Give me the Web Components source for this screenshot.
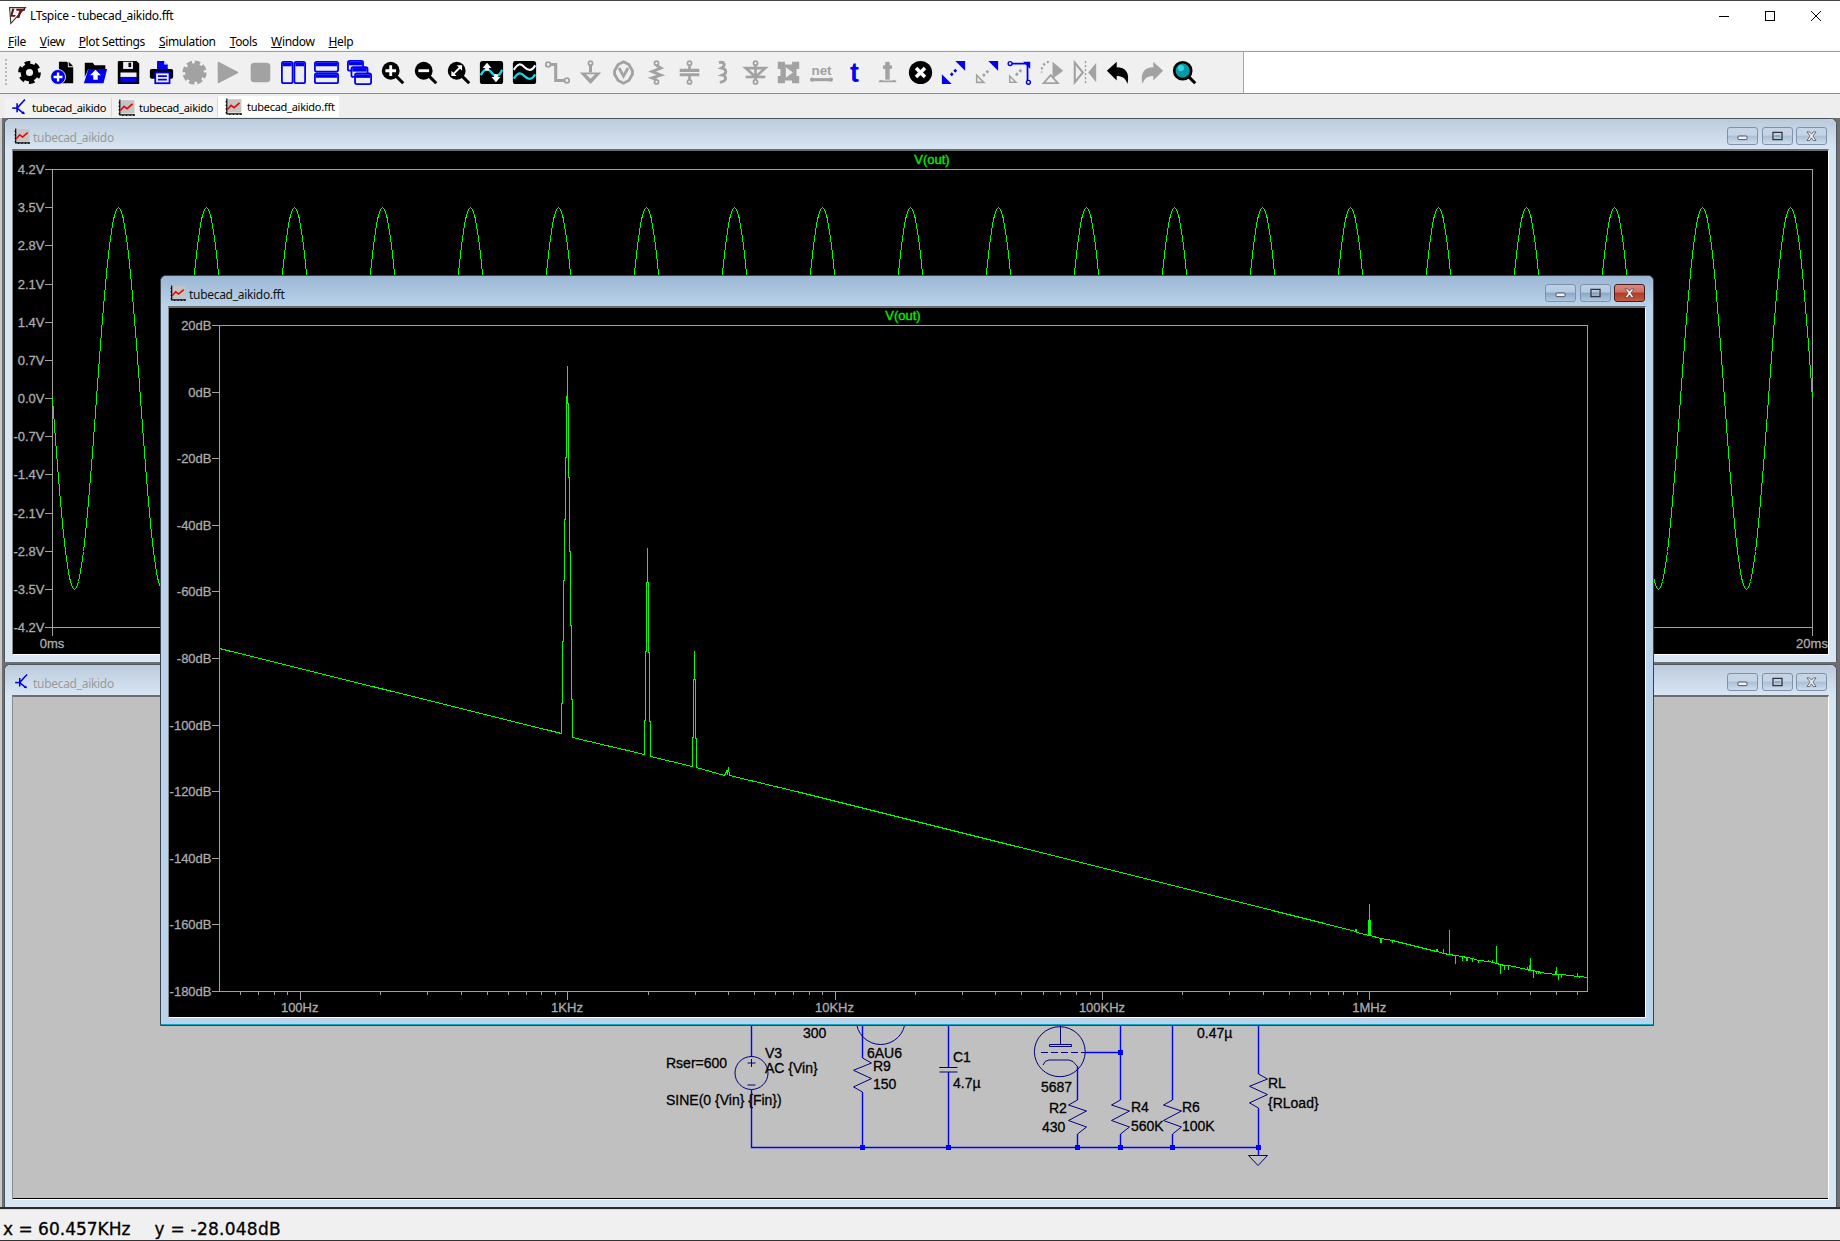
<!doctype html>
<html>
<head>
<meta charset="utf-8">
<title>LTspice</title>
<style>
  html, body { margin: 0; padding: 0; background: #f0f0f0; overflow: hidden; }
</style>
</head>
<body>
<lt-app>
  <lt-titlebar slot="title">LTspice - tubecad_aikido.fft</lt-titlebar>
  <lt-menubar slot="menu">
    <lt-menu><u>F</u>ile</lt-menu>
    <lt-menu><u>V</u>iew</lt-menu>
    <lt-menu><u>P</u>lot Settings</lt-menu>
    <lt-menu><u>S</u>imulation</lt-menu>
    <lt-menu><u>T</u>ools</lt-menu>
    <lt-menu><u>W</u>indow</lt-menu>
    <lt-menu><u>H</u>elp</lt-menu>
  </lt-menubar>
  <lt-toolbar slot="tools"></lt-toolbar>
  <lt-tabs slot="tabs">
    <lt-tab icon="schem" style="width:107px">tubecad_aikido</lt-tab>
    <lt-tab icon="plot" style="width:106px">tubecad_aikido</lt-tab>
    <lt-tab icon="plot" active style="width:121px">tubecad_aikido.fft</lt-tab>
  </lt-tabs>
  <lt-mdi slot="mdi">
    <lt-window icon="plot" x="4" y="0" w="1833" h="544" label="tubecad_aikido">
      <lt-plot kind="time" vb="13 151 1815 502"></lt-plot>
    </lt-window>
    <lt-window icon="schem" x="4" y="546" w="1833" h="543" label="tubecad_aikido">
      <lt-schematic vb="13 697 1815 501"></lt-schematic>
    </lt-window>
    <lt-window icon="plot" x="160" y="157" w="1494" h="751" label="tubecad_aikido.fft" active>
      <lt-plot kind="fft" vb="169 308 1476 709"></lt-plot>
    </lt-window>
  </lt-mdi>
  <lt-status slot="status"><span>x = 60.457KHz</span><span style="letter-spacing:.25px">y = -28.048dB</span></lt-status>
</lt-app>

<script>
const GREY = '#a2a2a2';
const BLUE = '#0000f0';
const CYAN = '#19d6e6';
const UI_FONT = '"Noto Sans", "Open Sans", sans-serif';
const TRACE_FONT = '"Liberation Sans", Arial, sans-serif';

const zoomGlass = inner => `<circle cx="12" cy="12" r="10" fill="#000"/><path d="M18 18l8 8" stroke="#000" stroke-width="3.4" fill="none"/>${inner}`;
const pinTop = c => `<circle cx="14" cy="3.5" r="2.3" fill="none" stroke="${c}" stroke-width="2"/>`;
const pinBottom = c => `<circle cx="14" cy="24.5" r="2.3" fill="none" stroke="${c}" stroke-width="2"/>`;

// toolbar and window glyphs, all on a 28 box
const ICONS = {
  gear: `<circle cx="14" cy="14" r="7" fill="none" stroke="#000" stroke-width="6"/><circle cx="14" cy="14" r="10.5" fill="none" stroke="#000" stroke-width="4.6" stroke-dasharray="6 5"/>`,
  newdoc: `<path d="M10 2h9l1 1v5h6v18H10z" fill="#000"/><path d="M21 2l5 5h-5z" fill="#000"/><circle cx="9" cy="19" r="8.4" fill="${BLUE}" stroke="#f0f0f0" stroke-width="1"/><path d="M9 14v10M4 19h10" stroke="#fff" stroke-width="2.6"/>`,
  open: `<path d="M2 3h9l2 3h12v4H6l-4 9z" fill="#000"/><path d="M6 10h21l-4 16H1z" fill="${BLUE}"/><path d="M14 11l6 6h-3.500v5h-5v-5H8z" fill="#fff"/>`,
  save: `<path d="M3 1h20l3 3v23H2V2z" fill="#000"/><rect x="8" y="2" width="11" height="8" fill="#f0f0f0"/><rect x="14" y="3" width="3" height="5" fill="#000"/><rect x="5" y="14" width="18" height="5" fill="#f0f0f0"/><rect x="5" y="19" width="18" height="6" fill="${BLUE}"/>`,
  print: `<path d="M9 1h8l4 4v7H9z" fill="${BLUE}"/><path d="M17 1l4 4h-4z" fill="#f0f0f0"/><rect x="1" y="10" width="26" height="11" rx="2" fill="#000"/><rect x="7" y="14" width="16" height="12" fill="#f0f0f0" stroke="${BLUE}" stroke-width="2"/><path d="M10 18h10M10 22h10" stroke="${BLUE}" stroke-width="2"/>`,
  halt: `<circle cx="14" cy="14" r="10.5" fill="${GREY}"/><circle cx="14" cy="14" r="11.5" fill="none" stroke="${GREY}" stroke-width="4" stroke-dasharray="6 3.030"/>`,
  play: `<path d="M4 3l21 11L4 25z" fill="${GREY}" stroke="${GREY}" stroke-linejoin="round" stroke-width="2"/>`,
  stop: `<rect x="3" y="3" width="22" height="22" rx="4" fill="${GREY}"/>`,
  tilev: `<rect x="1" y="2" width="12" height="24" rx="2" fill="#eee" stroke="${BLUE}" stroke-width="2"/><rect x="15" y="2" width="12" height="24" rx="2" fill="#eee" stroke="${BLUE}" stroke-width="2"/><path d="M2 5h10M16 5h10" stroke="${BLUE}" stroke-width="4"/>`,
  tileh: `<rect x="1" y="2" width="26" height="11" rx="2" fill="#eee" stroke="${BLUE}" stroke-width="2"/><rect x="1" y="15" width="26" height="11" rx="2" fill="#eee" stroke="${BLUE}" stroke-width="2"/><path d="M2 5h24M2 18h24" stroke="${BLUE}" stroke-width="4"/>`,
  cascade: `<rect x="1" y="1" width="17" height="11" rx="2" fill="#eee" stroke="${BLUE}" stroke-width="2"/><path d="M2 4h15" stroke="${BLUE}" stroke-width="4"/><rect x="5" y="8" width="18" height="11" rx="2" fill="#eee" stroke="${BLUE}" stroke-width="2"/><path d="M6 11h16" stroke="${BLUE}" stroke-width="4"/><rect x="9" y="15" width="18" height="12" rx="2" fill="#eee" stroke="${BLUE}" stroke-width="2"/><path d="M10 18h16" stroke="${BLUE}" stroke-width="4"/>`,
  zoomin: zoomGlass(`<path d="M12 6v12M6 12h12" stroke="#fff" stroke-width="3.200"/>`),
  zoomout: zoomGlass(`<path d="M6 12h12" stroke="#fff" stroke-width="3.200"/>`),
  zoomfit: zoomGlass(`<path d="M7 17L17 7" stroke="#fff" stroke-width="2"/><path d="M12 6h6v6zM6 12v6h6z" fill="#fff"/>`),
  autoscale: `<rect x="1" y="1" width="26" height="26" rx="3" fill="#000"/><path d="M2 17c5-9 8-8 12-3s8 6 12-3" fill="none" stroke="${CYAN}" stroke-width="2.600"/><path d="M9 3l5 6h-3v3H7V9H4zM19 25l-5-6h3v-3h4v3h3z" fill="#fff"/>`,
  wave: `<rect x="1" y="1" width="26" height="26" rx="3" fill="#000"/><path d="M2 11c5-8 8-7 12-3s8 5 12-2" fill="none" stroke="#fff" stroke-width="2.400"/><path d="M2 21c5-8 8-7 12-3s8 5 12-2" fill="none" stroke="${CYAN}" stroke-width="2.600"/>`,
  wire: `<path d="M3 5h9v18h10" fill="none" stroke="${GREY}" stroke-width="3.400"/><circle cx="3.500" cy="5" r="2.600" fill="#f0f0f0" stroke="${GREY}" stroke-width="2"/><circle cx="24.500" cy="23" r="2.600" fill="#f0f0f0" stroke="${GREY}" stroke-width="2"/>`,
  ground: pinTop(GREY) + `<path d="M14 6v8" stroke="${GREY}" stroke-width="3.400"/><path d="M2 14h24L14 27z" fill="${GREY}"/><path d="M9 16h10l-5 5z" fill="#eee"/>`,
  label: `<path d="M14 2l6 3 4 7v4l-4 7-6 3-6-3-4-7v-4l4-7z" fill="none" stroke="${GREY}" stroke-width="3.200"/><path d="M9 9l5 9 5-9" fill="none" stroke="${GREY}" stroke-width="3.200"/>`,
  resistor: pinTop(GREY) + pinBottom(GREY) + `<path d="M14 6l5 3-10 4 10 4-10 3 5 2" fill="none" stroke="${GREY}" stroke-width="3.200"/>`,
  cap: pinTop(GREY) + pinBottom(GREY) + `<path d="M14 6v5M14 17v5" stroke="${GREY}" stroke-width="3"/><path d="M3 11.500h22M3 16.500h22" stroke="${GREY}" stroke-width="3.600"/>`,
  inductor: `<path d="M10 3c6-2 8 3 3 6c6 1 6 6 1 8c5 1 5 7-3 8" fill="none" stroke="${GREY}" stroke-width="3.200"/>`,
  diode: pinTop(GREY) + pinBottom(GREY) + `<path d="M14 6v16" stroke="${GREY}" stroke-width="3"/><path d="M3 9h22L14 19z" fill="none" stroke="${GREY}" stroke-width="3"/><path d="M3 19h22" stroke="${GREY}" stroke-width="3"/>`,
  component: `<path d="M2 2h8v3h8V2h8v8h-3v8h3v8h-8v-3h-8v3H2v-8h3v-8H2z" fill="${GREY}"/><path d="M11 8l8 6-8 6z" fill="#eee"/>`,
  net: `<text x="14" y="17" text-anchor="middle" font-family="Liberation Sans" font-weight="700" font-size="15" fill="${GREY}">net</text><path d="M3 22h22" stroke="${GREY}" stroke-width="3.400"/><circle cx="3.500" cy="22" r="2.400" fill="${GREY}"/><circle cx="24.500" cy="22" r="2.400" fill="${GREY}"/>`,
  text: `<text x="14" y="25" text-anchor="middle" font-family="Liberation Sans" font-weight="700" font-size="30" fill="${BLUE}">t</text>`,
  spice: `<path d="M14 2v20" stroke="${GREY}" stroke-width="5"/><path d="M9 8h10" stroke="${GREY}" stroke-width="4"/><path d="M4 25c0-3 4-3 5-2h10c1-1 5-1 5 2" fill="${GREY}"/>`,
  cancel: `<circle cx="14" cy="14" r="13" fill="#000"/><path d="M9 9l10 10M19 9L9 19" stroke="#fff" stroke-width="4"/>`,
  move: `<path d="M27 1v11L16 1z" fill="${BLUE}"/><path d="M1 27V16l11 11z" fill="${BLUE}"/><path d="M11 17l6-6" stroke="${BLUE}" stroke-width="3" stroke-dasharray="3 2.500"/>`,
  drag: `<path d="M27 1v11L16 1z" fill="${BLUE}"/><path d="M3 25V17l8 8z" fill="none" stroke="${GREY}" stroke-width="1.800"/><path d="M10 18l8-8" stroke="${GREY}" stroke-width="3" stroke-dasharray="3 2.500"/>`,
  rotate: `<path d="M5 4h18v20" fill="none" stroke="${BLUE}" stroke-width="2"/><path d="M18 2h8v8z" fill="${BLUE}"/><circle cx="3.500" cy="4" r="2.200" fill="#eee" stroke="${BLUE}" stroke-width="1.600"/><circle cx="24" cy="25" r="2.200" fill="#eee" stroke="${BLUE}" stroke-width="1.600"/><path d="M3 25v-7l7 7z" fill="none" stroke="${GREY}" stroke-width="1.600"/><path d="M10 17l6-6" stroke="${GREY}" stroke-width="3" stroke-dasharray="3 2.500"/>`,
  flip: `<path d="M14 2l12 10-12 9z" fill="${GREY}"/><path d="M4 26l8-9 8 9z" fill="none" stroke="${GREY}" stroke-width="2"/><path d="M10 2a10 10 0 0 0-8 12" fill="none" stroke="${GREY}" stroke-width="2.400" stroke-dasharray="2.500 2.500"/>`,
  mirror: `<path d="M2 3l9 11-9 11z" fill="none" stroke="${GREY}" stroke-width="2.400"/><path d="M26 3l-9 11 9 11z" fill="${GREY}"/><path d="M14 1v26" stroke="${GREY}" stroke-width="1.600" stroke-dasharray="2.500 2"/>`,
  undo: `<path d="M1 12L12 2v6c10 0 15 6 12 19c-2-7-6-9-12-9v5z" fill="#000"/>`,
  redo: `<path d="M27 12L16 2v6C6 8 1 14 4 27c2-7 6-9 12-9v5z" fill="${GREY}"/>`,
  find: `<circle cx="12" cy="12" r="9.500" fill="#079aa6" stroke="#000" stroke-width="3"/><circle cx="10" cy="9" r="3.500" fill="#2fd4dc"/><path d="M18 18l8 8" stroke="#000" stroke-width="3.400"/>`,
  plot: `<rect x="4" y="2" width="23" height="22" fill="#c4c4c4"/><path d="M3 1v25h25M1 6h2M1 12h2M1 18h2M1 24h2M8 26v2M14 26v2M20 26v2M26 26v2" fill="none" stroke="#000" stroke-width="2"/><path d="M4 19l6-7 5 4 9-8" fill="none" stroke="#e00" stroke-width="2.600"/>`,
  schem: `<path d="M10 7v15M10 15l10-11M10 15l11 9M20 4l3-3" fill="none" stroke="#0000e0" stroke-width="2.600"/><path d="M23 25l-6-1 4-4z" fill="#0000e0"/><path d="M2 15h8" stroke="#0000e0" stroke-width="2.600"/>`,
  logo: `<path d="M1 1h26L3 27z" fill="#fff" stroke="#333" stroke-width="1.800"/><path d="M5 3h4l-3 10h5l-1 3H2zM12 3h15l-1 3h-5l-4 12h-4l4-12h-5z" fill="#6b1212"/>`
};

class LtIcon extends HTMLElement {
  constructor() {
    super();
    this.attachShadow({ mode: 'open' });
  }

  connectedCallback() {
    const size = this.getAttribute('size') || 16;
    this.shadowRoot.innerHTML = `
      <style>
        :host { display: inline-block; width: ${size}px; height: ${size}px; flex: none; }
        svg { display: block; overflow: visible; }
      </style>
      <svg width="${size}" height="${size}" viewBox="0 0 28 28">${ICONS[this.getAttribute('name')] || ''}</svg>`;
  }
}

class LtApp extends HTMLElement {
  constructor() {
    super();
    this.attachShadow({ mode: 'open' });
    this.shadowRoot.innerHTML = `
      <style>
        :host { display: flex; flex-direction: column; width: 1840px; height: 1241px; font-family: ${UI_FONT}; color: #000; }
      </style>
      <slot name="title"></slot>
      <slot name="menu"></slot>
      <slot name="tools"></slot>
      <slot name="tabs"></slot>
      <slot name="mdi"></slot>
      <slot name="status"></slot>`;
  }
}

class LtTitlebar extends HTMLElement {
  constructor() {
    super();
    this.attachShadow({ mode: 'open' });
    this.shadowRoot.innerHTML = `
      <style>
        :host { display: flex; align-items: center; height: 32px; background: #fff; border-top: 1px solid #444; padding-left: 9px; font-size: 12px; letter-spacing: -.3px; }
        .text { margin-left: 4px; margin-top: -3px; flex: 1; }
        .btn { width: 46px; height: 30px; display: flex; align-items: center; justify-content: center; margin-top: -3px; }
        .caption { display: flex; margin-right: 1px; }
      </style>
      <lt-icon name="logo" size="17" style="margin-top:-3px"></lt-icon>
      <span class="text"><slot></slot></span>
      <span class="caption">
        <span class="btn"><svg width="12" height="12" shape-rendering="crispEdges"><path d="M1 6.500h10" stroke="#000"/></svg></span>
        <span class="btn"><svg width="12" height="12" shape-rendering="crispEdges"><rect x="1.500" y="1.500" width="9" height="9" fill="none" stroke="#000"/></svg></span>
        <span class="btn"><svg width="12" height="12"><path d="M1 1l10 10M11 1L1 11" stroke="#000"/></svg></span>
      </span>`;
  }
}

class LtMenubar extends HTMLElement {
  constructor() {
    super();
    this.attachShadow({ mode: 'open' });
    this.shadowRoot.innerHTML = `
      <style>
        :host { display: flex; height: 18px; align-items: center; background: #fff; padding-left: 1px; font-size: 12px; letter-spacing: -.35px; box-shadow: inset 0 -1px 0 #f4f4f4; }
      </style>
      <slot></slot>`;
  }
}

class LtMenu extends HTMLElement {
  constructor() {
    super();
    this.attachShadow({ mode: 'open' });
    this.shadowRoot.innerHTML = `
      <style>
        :host { display: block; padding: 0 7px; margin-top: -2px; white-space: nowrap; }
      </style>
      <slot></slot>`;
  }
}

const TOOLS = ['gear', 'newdoc', 'open', 'save', 'print', 'halt', 'play', 'stop', 'tilev', 'tileh', 'cascade',
  'zoomin', 'zoomout', 'zoomfit', 'autoscale', 'wave', 'wire', 'ground', 'label', 'resistor', 'cap', 'inductor',
  'diode', 'component', 'net', 'text', 'spice', 'cancel', 'move', 'drag', 'rotate', 'flip', 'mirror', 'undo', 'redo', 'find'];

class LtToolbar extends HTMLElement {
  constructor() {
    super();
    this.attachShadow({ mode: 'open' });
    const items = TOOLS.map(n => `<span class="cell"><lt-icon name="${n}" size="25"></lt-icon></span>`).join('');
    this.shadowRoot.innerHTML = `
      <style>
        :host { display: block; height: 41px; background: #fff; border-top: 1px solid #a0a0a0; border-bottom: 1px solid #8c8c8c; }
        .band { width: 1244px; height: 41px; box-sizing: border-box; background: #f0f0f0; border-right: 1px solid #a8a8a8; display: flex; align-items: center; padding-left: 5px; }
        .grip { width: 2px; height: 28px; margin-right: 6px; background: repeating-linear-gradient(#b8b8b8 0 2px, transparent 2px 4px); }
        .cell { width: 33px; display: flex; justify-content: center; flex: none; }
      </style>
      <div class="band"><span class="grip"></span>${items}</div>`;
  }
}

class LtTabs extends HTMLElement {
  constructor() {
    super();
    this.attachShadow({ mode: 'open' });
    this.shadowRoot.innerHTML = `
      <style>
        :host { display: flex; align-items: flex-start; height: 24px; background: #eee; padding-left: 5px; font-size: 11px; letter-spacing: -.27px; }
      </style>
      <slot></slot>`;
  }
}

class LtTab extends HTMLElement {
  constructor() {
    super();
    this.attachShadow({ mode: 'open' });
  }

  connectedCallback() {
    this.shadowRoot.innerHTML = `
      <style>
        :host { display: flex; align-items: center; box-sizing: border-box; height: 19px; margin-top: 4px; padding-left: 6px; gap: 4px; background: #f2f2f2; border-right: 1px solid #d8d8d8; white-space: nowrap; }
        :host([active]) { height: 21px; margin-top: 2px; background: #fff; padding-left: 7px; gap: 5px; border-right: none; }
      </style>
      <lt-icon name="${this.getAttribute('icon')}" size="17"></lt-icon>
      <span><slot></slot></span>`;
  }
}

class LtMdi extends HTMLElement {
  constructor() {
    super();
    this.attachShadow({ mode: 'open' });
    this.shadowRoot.innerHTML = `
      <style>
        :host { display: block; position: relative; height: 1091px; background: #6e6e6e; }
        .edge { position: absolute; left: 0; top: 0; width: 2px; height: 100%; background: #c8c8c8; }
        .foot { position: absolute; left: 0; right: 0; bottom: 0; height: 2px; background: #2c2c2c; }
      </style>
      <div class="edge"></div><div class="foot"></div>
      <slot></slot>`;
  }
}

class LtCaptionButton extends HTMLElement {
  constructor() {
    super();
    this.attachShadow({ mode: 'open' });
  }

  connectedCallback() {
    const kind = this.getAttribute('kind');
    const glyph = {
      min: '<rect x="11" y="8" width="10" height="4" rx="1" fill="#eef2f6" stroke="#445"/>',
      max: '<rect x="11" y="4" width="10" height="8" fill="none" stroke="#334" stroke-width="1.400"/><rect x="13" y="7" width="6" height="2" fill="#8aa"/>',
      close: '<path d="M11 3.500l3 0 2 2.500 2-2.500 3 0-3.500 4.500 3.500 5-3 0-2-3-2 3-3 0 3.500-5z" fill="#f4f4f4" stroke="#445" stroke-width=".8"/>'
    }[kind];
    this.shadowRoot.innerHTML = `
      <style>
        :host { display: block; width: 31px; height: 18px; box-sizing: border-box; border: 1px solid #7f92ab; border-radius: 3px; background: linear-gradient(#c6d5e6, #c6d5e6 45%, #a9bfd6 50%, #cfdded); }
        :host([hot]) { background: linear-gradient(#d98a7c, #d07060 45%, #b03a26 50%, #c55a44); border-color: #4a1c20; }
        :host([lit]) { background: linear-gradient(#bcd0e4, #b4cbe2 45%, #8ba7c6 50%, #b0c8e0); }
        svg { display: block; }
      </style>
      <svg width="29" height="16" viewBox="0 0 32 16">${glyph}</svg>`;
  }
}

class LtWindow extends HTMLElement {
  constructor() {
    super();
    this.attachShadow({ mode: 'open' });
  }

  connectedCallback() {
    const box = ['x', 'y', 'w', 'h'].map(k => this.getAttribute(k));
    const lit = this.hasAttribute('active');
    this.shadowRoot.innerHTML = `
      <style>
        :host { position: absolute; left: ${box[0]}px; top: ${box[1]}px; width: ${box[2]}px; height: ${box[3]}px; box-sizing: border-box;
                display: flex; flex-direction: column; padding: 0 7px 7px; background: #d8e5f2; border: 1px solid #4d5660; border-bottom: none; border-radius: 6px 6px 0 0; }
        :host([active]) { background: #b9d3ec; border: 1px solid #39424c; box-shadow: inset 0 -1px 0 #12a5bd; }
        .head { flex: none; height: 30px; margin: 0 -7px; padding: 9px 9px 0 9px; box-sizing: border-box; display: flex; align-items: flex-start; gap: 3px;
                border-radius: 6px 6px 0 0; background: linear-gradient(#bccbdc, #d8e6f3); color: #9a9a9a; font-size: 12px; letter-spacing: -.3px; }
        :host([active]) .head { background: linear-gradient(#9cb7d3, #b9d3ec); color: #111; padding-right: 8px; }
        .name { flex: 1; line-height: 17px; margin-top: 1px; }
        .btns { display: flex; gap: 3.5px; margin-top: -1px; }
        .client { flex: 1; min-height: 0; background: #000; border-top: 2px solid #6c6c6c; border-left: 1px solid #8a8a8a; border-right: 1px solid #fff; border-bottom: 1px solid #fff; overflow: hidden; }
        ::slotted(*) { display: block; }
      </style>
      <div class="head">
        <lt-icon name="${this.getAttribute('icon')}" size="16"></lt-icon>
        <span class="name">${this.getAttribute('label')}</span>
        <span class="btns">
          <lt-caption-button kind="min" ${lit ? 'lit' : ''}></lt-caption-button>
          <lt-caption-button kind="max" ${lit ? 'lit' : ''}></lt-caption-button>
          <lt-caption-button kind="close" ${lit ? 'hot' : ''}></lt-caption-button>
        </span>
      </div>
      <div class="client"><slot></slot></div>`;
  }
}

// the two plot panes, drawn in page coordinates through the svg viewBox
const hairline = (x1, y1, x2, y2) => `M${x1 + .5} ${y1 + .5}L${x2 + .5} ${y2 + .5}`;
const snap = ([x, y]) => (Math.round(x) + .5) + ',' + (Math.round(y) + .5);

function timeTrace() {
  const pts = [];
  for (let x = 52; x <= 1812; x += 1) {
    pts.push([x, 398 + 190.7 * Math.sin(2 * Math.PI * (x - 52) / 88)]);
  }
  return pts.map(snap).join(' ');
}

function fftBase(x) {
  const marks = [[219, 648], [1320, 922], [1369, 935], [1449, 954], [1496, 963], [1530, 970], [1556, 974], [1587, 977]];
  for (let i = 1; i < marks.length; i++) {
    if (x <= marks[i][0]) {
      const a = marks[i - 1], b = marks[i];
      return a[1] + (b[1] - a[1]) * (x - a[0]) / (b[0] - a[0]);
    }
  }
  return 977;
}

function fftTrace() {
  const low = [[219, 648], [561, 733], [561, 703], [562, 703], [562, 641], [563, 641], [563, 580], [564, 580], [564, 519],
    [565, 519], [565, 457], [566, 457], [566, 396], [567, 396], [567, 365], [567, 403], [568, 403], [568, 477], [569, 477],
    [569, 551], [570, 551], [570, 625], [571, 625], [571, 699], [572, 699], [572, 737], [644, 754], [644, 720], [645, 720],
    [645, 651], [646, 651], [646, 582], [647, 582], [647, 547], [647, 582], [648, 582], [648, 652], [649, 652], [649, 721],
    [650, 721], [650, 756], [692, 766], [692, 737], [693, 737], [693, 679], [694, 679], [694, 650], [694, 679], [695, 679],
    [695, 738], [696, 738], [696, 767], [724, 775], [726, 771], [727, 773], [728, 767], [729, 775], [800, 792], [1320, 922]];
  const spikes = [[1355, 928], [1356, 928], [1368, 919], [1369, 903], [1370, 919], [1380, 942], [1381, 942], [1392, 942],
    [1436, 948], [1437, 948], [1443, 948], [1449, 929], [1455, 963], [1462, 960], [1466, 960], [1467, 960], [1472, 961],
    [1478, 962], [1488, 959], [1492, 959], [1496, 945], [1500, 973], [1504, 969], [1508, 969], [1527, 966], [1529, 964],
    [1530, 957], [1533, 977], [1536, 973], [1538, 973], [1540, 973], [1555, 970], [1556, 966], [1558, 979], [1561, 977],
    [1577, 972], [1579, 977]];
  const pts = low.slice();
  spikes.forEach(([x, y]) => {
    pts.push([x, fftBase(x)], [x, y], [x, fftBase(x)]);
  });
  pts.push([1587, 977]);
  return pts.map(snap).join(' ');
}

const PLOTS = {
  time: {
    left: 52, top: 169, right: 1812, bottom: 627,
    traceY: 159,
    yLabels: ['4.2V', '3.5V', '2.8V', '2.1V', '1.4V', '0.7V', '0.0V', '-0.7V', '-1.4V', '-2.1V', '-2.8V', '-3.5V', '-4.2V'],
    xLabels: [[52, '0ms'], [1812, '20ms']],
    majors: [52, 1812],
    minors: [],
    trace: timeTrace
  },
  fft: {
    left: 219, top: 325, right: 1587, bottom: 991,
    traceY: 315.500,
    yLabels: ['20dB', '0dB', '-20dB', '-40dB', '-60dB', '-80dB', '-100dB', '-120dB', '-140dB', '-160dB', '-180dB'],
    xLabels: [[299.7, '100Hz'], [567, '1KHz'], [834.5, '10KHz'], [1102, '100KHz'], [1369.3, '1MHz']],
    majors: [299.7, 567, 834.5, 1102, 1369.3],
    minors: [],
    trace: fftTrace
  }
};

// log ticks between the decades of the fft x axis
for (let dec = 1; dec <= 6; dec++) {
  for (let m = 2; m <= 9; m++) {
    const x = 299.7 + (dec - 1 + Math.log10(m)) * 267.4;
    if (x < 1587) PLOTS.fft.minors.push(x);
  }
}
[6, 7, 8, 9].forEach(m => PLOTS.fft.minors.push(299.7 + (Math.log10(m) - 1) * 267.4));

class LtPlot extends HTMLElement {
  constructor() {
    super();
    this.attachShadow({ mode: 'open' });
  }

  connectedCallback() {
    const vb = this.getAttribute('vb').split(' ');
    const p = PLOTS[this.getAttribute('kind')];
    const step = (p.bottom - p.top) / (p.yLabels.length - 1);
    const cx = (p.left + p.right) / 2;
    let axes = hairline(p.left, p.top, p.right, p.top) + hairline(p.right, p.top, p.right, p.bottom)
      + hairline(p.left, p.bottom, p.right, p.bottom) + hairline(p.left, p.top, p.left, p.bottom);
    let labels = '';
    p.yLabels.forEach((t, i) => {
      const y = Math.round(p.top + i * step);
      axes += hairline(p.left - 8, y, p.left, y);
      labels += `<text x="${p.left - 7.5}" y="${y}" text-anchor="end" dominant-baseline="central">${t}</text>`;
    });
    p.majors.forEach(x => { axes += hairline(Math.round(x), p.bottom, Math.round(x), p.bottom + 8); });
    p.minors.forEach(x => { axes += hairline(Math.round(x), p.bottom, Math.round(x), p.bottom + 3); });
    p.xLabels.forEach(([x, t]) => {
      labels += `<text x="${x}" y="${p.bottom + 16}" text-anchor="middle" dominant-baseline="central">${t}</text>`;
    });
    this.shadowRoot.innerHTML = `
      <style>
        :host { display: block; background: #000; }
        svg { display: block; font: 13px ${TRACE_FONT}; }
        .labels { fill: #acacac; stroke: #acacac; stroke-width: .3px; }
        .name { fill: #00f000; stroke: #00f000; stroke-width: .35px; }
      </style>
      <svg width="${vb[2]}" height="${vb[3]}" viewBox="${vb.join(' ')}">
        <path d="${axes}" stroke="#a0a0a0" fill="none" shape-rendering="crispEdges"/>
        <g class="labels">${labels}</g>
        <text class="name" x="${cx}" y="${p.traceY}" text-anchor="middle" dominant-baseline="central">V(out)</text>
        <polyline points="${p.trace()}" fill="none" stroke="#00ff00" shape-rendering="crispEdges"/>
      </svg>`;
  }
}

// resistor symbol: dir is which side the first bend goes to
const ZIG_LEFT = [5, 6, 9.5, 6.5, 7];
const ZIG_RIGHT = [5, 7.3, 8.3, 8.3, 5.1];
function zigzag(x, y, dir) {
  const rows = dir < 0 ? ZIG_LEFT : ZIG_RIGHT;
  const sides = [dir, -dir, dir, -dir, 0];
  let yy = y;
  let d = `M${x} ${y}`;
  rows.forEach((h, i) => {
    yy += h;
    d += `L${x + sides[i] * 9} ${yy}`;
  });
  return d;
}

const NET_TEXT = [
  [803, 1033, '300'], [867, 1053, '6AU6'], [873, 1066, 'R9'], [873, 1084, '150'], [765, 1053, 'V3'],
  [765, 1068, 'AC {Vin}'], [666, 1063, 'Rser=600'], [666, 1100, 'SINE(0 {Vin} {Fin})'], [953, 1057, 'C1'],
  [953, 1083, '4.7µ'], [1041, 1087, '5687'], [1049, 1108, 'R2'], [1042, 1127, '430'], [1131, 1107, 'R4'],
  [1131, 1126, '560K'], [1182, 1107, 'R6'], [1182, 1126, '100K'], [1197, 1033, '0.47µ'], [1268, 1083, 'RL'],
  [1268, 1103, '{RLoad}']
];

class LtSchematic extends HTMLElement {
  constructor() {
    super();
    this.attachShadow({ mode: 'open' });
  }

  connectedCallback() {
    const vb = this.getAttribute('vb').split(' ');
    const wires = [
      'M751.500 1020V1057M751.500 1090V1147.500H1258.500',
      'M862.500 1020V1058M862.500 1092V1147',
      'M948.500 1020V1067M948.500 1072V1147',
      'M1085 1052.500H1120.500',
      'M1077.500 1066V1100M1077.500 1134V1147',
      'M1120.500 1020V1100M1120.500 1134V1147',
      'M1172.500 1020V1100M1172.500 1134V1147',
      'M1258.500 1020V1074M1258.500 1108V1155'
    ].join('');
    const parts = [
      zigzag(862.5, 1058, 1), zigzag(1077.5, 1100, -1), zigzag(1120.5, 1100, -1), zigzag(1172.5, 1100, -1), zigzag(1258.5, 1074, 1),
      'M751.500 1059v8M747.500 1063h8M747.500 1085h8',
      'M1060.500 1020V1044M1049.500 1044.500h22v2h-22z',
      'M1043 1065q2-5 6-5h20q4 0 8 6'
    ].join('');
    const dots = [[862.5, 1147.5], [948.5, 1147.5], [1077.5, 1147.5], [1120.5, 1147.5], [1172.5, 1147.5], [1258.5, 1147.5], [1120.5, 1052.5]]
      .map(([x, y]) => `<rect x="${x - 2.5}" y="${y - 2.5}" width="5" height="5" fill="#0000ff"/>`).join('');
    const text = NET_TEXT.map(([x, y, t]) => `<text x="${x}" y="${y}" dominant-baseline="central">${t}</text>`).join('');
    this.shadowRoot.innerHTML = `
      <style>
        :host { display: block; background: #c0c0c0; }
        svg { display: block; font: 14px ${TRACE_FONT}; }
        .net { fill: #000; stroke: #000; stroke-width: .3px; }
      </style>
      <svg width="${vb[2]}" height="${vb[3]}" viewBox="${vb.join(' ')}">
        <path d="${wires}" stroke="#0000ff" fill="none" stroke-width="1.400"/>
        <g fill="none" stroke="#000080">
          <path d="${parts}"/>
          <path d="M1041 1052.500h44" stroke-dasharray="7 3"/>
          <circle cx="751.500" cy="1073" r="16.500"/>
          <ellipse cx="880.700" cy="1020" rx="24.500" ry="24.500"/>
          <ellipse cx="1059.800" cy="1051.700" rx="25.400" ry="25"/>
          <path d="M948.500 1067.500h-9h18M939.500 1072h18"/>
          <path d="M1248.500 1155.500h19l-9.500 10z"/>
        </g>
        ${dots}
        <g class="net">${text}</g>
      </svg>`;
  }
}

class LtStatus extends HTMLElement {
  constructor() {
    super();
    this.attachShadow({ mode: 'open' });
    this.shadowRoot.innerHTML = `
      <style>
        :host { display: flex; gap: 24px; align-items: center; box-sizing: border-box; height: 32px; padding: 7px 0 0 3px; background: #f0f0f0; border-top: 1px solid #d8d8d8; border-bottom: 1px solid #333; font: 17px "DejaVu Sans", sans-serif; color: #000; -webkit-text-stroke: .3px #000; }
      </style>
      <slot></slot>`;
  }
}

customElements.define('lt-icon', LtIcon);
customElements.define('lt-app', LtApp);
customElements.define('lt-titlebar', LtTitlebar);
customElements.define('lt-menubar', LtMenubar);
customElements.define('lt-menu', LtMenu);
customElements.define('lt-toolbar', LtToolbar);
customElements.define('lt-tabs', LtTabs);
customElements.define('lt-tab', LtTab);
customElements.define('lt-mdi', LtMdi);
customElements.define('lt-caption-button', LtCaptionButton);
customElements.define('lt-window', LtWindow);
customElements.define('lt-plot', LtPlot);
customElements.define('lt-schematic', LtSchematic);
customElements.define('lt-status', LtStatus);
</script>
</body>
</html>
